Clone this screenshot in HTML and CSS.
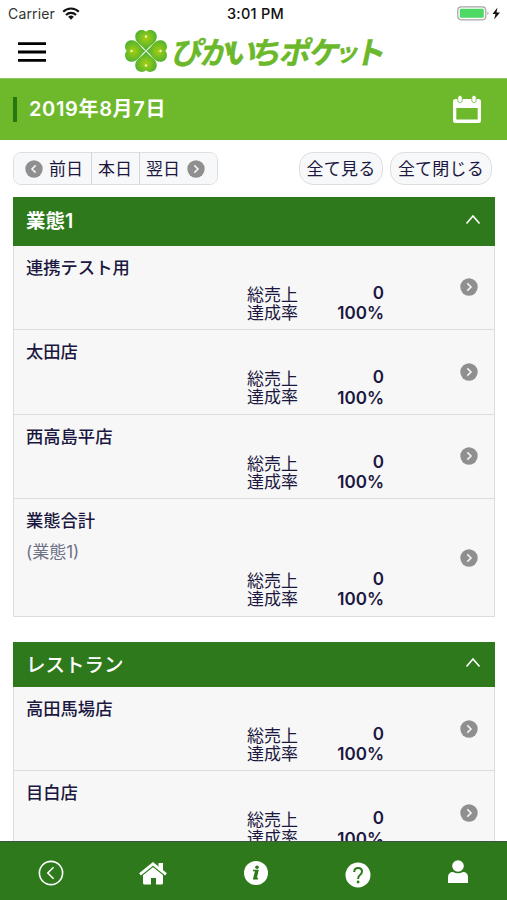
FILE: index.html
```html
<!DOCTYPE html>
<html lang="ja">
<head>
<meta charset="utf-8">
<title>ぴかいちポケット</title>
<link rel="stylesheet" href="styles.css">
</head>
<body>
<svg class="defs" width="0" height="0">
  <symbol id="next" viewBox="0 0 18 18"><circle cx="9" cy="9" r="8.7" fill="#8f8f8f"/><path d="M7.3 5.4 11 9l-3.7 3.6" fill="none" stroke="#f4f4f4" stroke-width="1.6"/></symbol>
  <symbol id="up" viewBox="0 0 16 12"><path d="M1.5 10.5 8 3l6.5 7.5" fill="none" stroke="#fff" stroke-width="1.6"/></symbol>
</svg>
<div class="app">
  <div class="status">
    <span class="carrier">Carrier</span>
    <svg class="wifi" width="18" height="13" viewBox="0 0 18 13"><g fill="none" stroke="#111" stroke-width="2.1"><path d="M1.2 4.8a11 11 0 0 1 15.6 0"/><path d="M4 8a7 7 0 0 1 10 0"/></g><path d="M6.2 9.8a4 4 0 0 1 5.6 0L9 12.8z" fill="#111"/></svg>
    <span class="time">3:01 PM</span>
    <svg class="battery" width="45" height="15" viewBox="0 0 45 15"><rect x=".8" y=".8" width="28" height="13" rx="3.5" fill="#fff" stroke="#a5a5a5" stroke-width="1.2"/><rect x="2.8" y="2.8" width="24" height="9" rx="1.2" fill="#4cd964"/><path d="M30.5 5.3q2 2 0 4z" fill="#999"/><path d="M40.500 1.500 35.500 8h3l-1.400 5.500L43 6.500h-3.500z" fill="#111"/></svg>
  </div>
  <header class="top">
    <svg class="menu" width="28" height="20" viewBox="0 0 28 20"><path d="M0 1.700h28M0 10h28M0 18.300h28" stroke="#000" stroke-width="2.800"/></svg>
    <svg class="clover" width="42" height="42" viewBox="-21 -21 42 42">
      <defs><radialGradient id="leaf" cx=".5" cy=".4" r=".6"><stop offset="0" stop-color="#a6cf10"/><stop offset="1" stop-color="#42ad36"/></radialGradient>
      <g id="petal"><path d="M0-.5C-4-6-11.500-8-10.700-15.300-10-21-3-22.500 0-19.300 3-22.500 10-21 10.700-15.300 11.500-8 4-6 0-.5z" fill="url(#leaf)"/><circle cy="-14.500" r="1.200" fill="#f4f7b5"/></g></defs>
      <use href="#petal"/><use href="#petal" transform="rotate(90)"/><use href="#petal" transform="rotate(180)"/><use href="#petal" transform="rotate(270)"/>
    </svg>
    <div class="logo"><span class="wide">ぴ</span><span>か</span><span class="narrow">い</span><span>ち</span><span class="wide">ポ</span><span>ケ</span><span class="small">ッ</span><span>ト</span></div>
  </header>
  <div class="datebar">
    <h1>2019年8月7日</h1>
    <svg width="28" height="29" viewBox="0 0 28 29"><path fill="#fff" fill-rule="evenodd" d="M2.500 4h23Q28 4 28 6.500v19q0 2.500-2.500 2.500h-23Q0 28 0 25.500v-19Q0 4 2.500 4zM3.300 13v11.500h21.400V13z"/><g fill="#fff" stroke="#6fb92c" stroke-width=".8"><rect x="4.800" y=".5" width="4.400" height="7" rx="2"/><rect x="18.800" y=".5" width="4.400" height="7" rx="2"/></g></svg>
  </div>
  <div class="tools">
    <div class="days"><button class="prev"><svg width="18" height="18" class="flip"><use href="#next"/></svg>前日</button><button class="today">本日</button><button class="following">翌日<svg width="18" height="18"><use href="#next"/></svg></button></div>
    <button class="pill see">全て見る</button><button class="pill close">全て閉じる</button>
  </div>
  <main>
    <section>
      <h2>業態1<svg width="16" height="12"><use href="#up"/></svg></h2>
      <article><h3>連携テスト用</h3><dl><dt><span>総売上</span><span>達成率</span></dt><dd><span>0</span><span>100%</span></dd></dl><svg class="go" width="18" height="18"><use href="#next"/></svg></article>
      <article><h3>太田店</h3><dl><dt><span>総売上</span><span>達成率</span></dt><dd><span>0</span><span>100%</span></dd></dl><svg class="go" width="18" height="18"><use href="#next"/></svg></article>
      <article><h3>西高島平店</h3><dl><dt><span>総売上</span><span>達成率</span></dt><dd><span>0</span><span>100%</span></dd></dl><svg class="go" width="18" height="18"><use href="#next"/></svg></article>
      <article class="total"><h3>業態合計<small>(業態1)</small></h3><dl><dt><span>総売上</span><span>達成率</span></dt><dd><span>0</span><span>100%</span></dd></dl><svg class="go" width="18" height="18"><use href="#next"/></svg></article>
    </section>
    <section class="second">
      <h2>レストラン<svg width="16" height="12"><use href="#up"/></svg></h2>
      <article><h3>高田馬場店</h3><dl><dt><span>総売上</span><span>達成率</span></dt><dd><span>0</span><span>100%</span></dd></dl><svg class="go" width="18" height="18"><use href="#next"/></svg></article>
      <article><h3>目白店</h3><dl><dt><span>総売上</span><span>達成率</span></dt><dd><span>0</span><span>100%</span></dd></dl><svg class="go" width="18" height="18"><use href="#next"/></svg></article>
    </section>
  </main>
  <nav>
    <svg class="back" width="26" height="26" viewBox="0 0 26 26"><g fill="none" stroke="#fff" stroke-width="1.600"><circle cx="13" cy="13" r="11.600"/><path d="m15.600 7.200-5.800 5.800 5.800 5.800"/></g></svg>
    <svg class="home" width="28" height="23" viewBox="0 0 28 23"><path d="M4 13 14 5l10 8v8q0 1.500-1.500 1.500H17v-6.500h-5v6.500H5.500Q4 22.500 4 21z" fill="#fff"/><path d="M1 14.500 14 4l13 10.500" fill="none" stroke="#2d791b" stroke-width="1.600"/><path d="M1 12.300 14 1.800l13 10.500" fill="none" stroke="#fff" stroke-width="2.800"/><path d="M19.500 1H24v9l-4.500-4z" fill="#fff"/></svg>
    <svg class="info" width="26" height="26" viewBox="0 0 26 26"><circle cx="13" cy="13" r="12" fill="#fff"/><circle cx="14" cy="7.200" r="1.800" fill="#2d791b"/><path d="M10 10.500h4.800l-2 8h2.200M10 18.800h5" fill="none" stroke="#2d791b" stroke-width="1.600"/><path d="m13.600 10.500-2 8.300" stroke="#2d791b" stroke-width="3"/></svg>
    <svg class="help" width="26" height="26" viewBox="0 0 26 26"><circle cx="13" cy="13" r="12.500" fill="#fff"/><path d="M9.200 10Q9.200 6 13.200 6 17 6 17 9.500q0 2-2.300 3.700Q13.100 14.400 13.100 17" fill="none" stroke="#2d791b" stroke-width="2"/><circle cx="13.100" cy="20" r="1.400" fill="#2d791b"/></svg>
    <svg class="user" width="20" height="24" viewBox="0 0 20 24"><circle cx="10" cy="6" r="5.800" fill="#fff"/><path d="M0 23v-5.500Q0 12 5 12q5 2.600 10 0 5 0 5 5.500V23z" fill="#fff"/></svg>
  </nav>
</div>
</body>
</html>
```
FILE: styles.css
```css
* { box-sizing: border-box; margin: 0; padding: 0; }
body { background: #fff; color: #1b1740; font-family: Inter, "Noto Sans CJK JP", sans-serif; }
svg { display: block; flex: none; }
.defs { display: none; }
.app { width: 507px; height: 900px; display: flex; flex-direction: column; overflow: hidden; }
.status { height: 27px; display: grid; grid-template-columns: 62px 165px 1fr 50px; align-items: center; color: #333; font-size: 14px; line-height: 27px; flex: none; }
.carrier { padding-left: 8px; letter-spacing: .15px; }
.time { font-weight: 500; font-size: 14.5px; color: #111; letter-spacing: .25px; }
.top { height: 51px; flex: none; display: flex; align-items: flex-start; padding-left: 18px; }
.menu { margin-top: 15px; }
.clover { margin: 3px 0 0 79px; }
.logo { display: flex; align-items: flex-end; margin: 5px 0 0 6px; font-family: "Noto Sans CJK JP", sans-serif; font-size: 31px; line-height: 38px; font-weight: 700; color: #6bb82b; -webkit-text-stroke: .4px #6bb82b; transform: skewX(-12deg); }
.logo span { width: 27px; display: flex; justify-content: center; }
.logo .wide { width: 31px; }
.logo .narrow { width: 23px; }
.logo .small { width: 19px; font-size: 24px; }
.datebar { height: 62px; flex: none; display: flex; justify-content: space-between; align-items: center; padding: 0 26px 0 13px; background: #6eb92b; border-top: 1px solid #8dc764; color: #fff; }
.datebar h1 { border-left: 4px solid #28760f; padding-left: 12px; font-size: 20px; line-height: 25px; font-weight: 600; letter-spacing: .65px; }
.tools { height: 57px; flex: none; display: flex; padding: 12px 15px 0 13px; }
button { font: 17px/30px Inter, "Noto Sans CJK JP", sans-serif; color: #1b1740; background: #f7f8f9; border: 0; white-space: nowrap; }
.days { display: flex; width: 205px; height: 33px; border: 1px solid #dedee0; border-radius: 8px; overflow: hidden; margin-right: 81px; }
.days button { display: flex; align-items: center; gap: 6px; }
.prev { width: 77px; padding-left: 11px; }
.today { width: 49px; padding-left: 6px; border-left: 1px solid #d5d5d5 !important; border-right: 1px solid #d5d5d5 !important; }
.following { width: 77px; padding-left: 6px; }
.following svg { margin-left: 1px; }
.pill { height: 33px; border: 1px solid #dedee0; border-radius: 14px; text-align: center; letter-spacing: .25px; }
.flip { transform: scaleX(-1); }
.see { width: 84px; margin-right: 7px; }
.close { width: 102px; }
main { flex: 1; min-height: 0; overflow: hidden; padding: 0 12px 0 13px; }
h2 { height: 48.500px; padding: 0 14px 0 13px; display: flex; justify-content: space-between; align-items: center; background: #2d791b; color: #fff; font-size: 19.5px; line-height: 30px; font-weight: 600; }
h2 svg { margin-top: -5px; }
.second { margin-top: 25px; }
.second h2 { height: 45px; font-weight: 500; padding-top: 1px; }
article { height: 84.6px; display: grid; grid-template-columns: 221px 1fr 18px; grid-template-rows: 37px 1fr; padding: 0 16px 0 12px; background: #f7f7f7; border: solid #dcdcdc; border-width: 0 1px 1px; align-items: start; }
h3 { grid-column: 1 / 3; font-size: 17.3px; line-height: 24px; font-weight: 500; margin-top: 10px; }
h3 small { display: block; margin-top: 7px; color: #6f7188; font-size: 17px; font-weight: 400; }
dl { grid-column: 2; grid-row: 2; display: flex; }
dt { width: 72px; font-size: 17px; line-height: 18px; margin-top: 3px; }
dt span, dd span { display: block; }
dt span { height: 18px; }
dd { width: 65px; text-align: right; font-size: 17px; line-height: 20.5px; font-weight: 600; }
.go { grid-column: 3; grid-row: 1 / 3; align-self: center; }
.total { height: 117.5px; grid-template-rows: 69.5px 1fr; }
nav { height: 59px; flex: none; background: #2d791b; border-top: 1px solid #3f5345; display: grid; grid-template-columns: 102px 102px 103px 102px 98px; justify-items: center; align-items: center; padding-top: 4px; }
.help { margin-top: 4px; }
.user { margin-top: -3px; }
```
